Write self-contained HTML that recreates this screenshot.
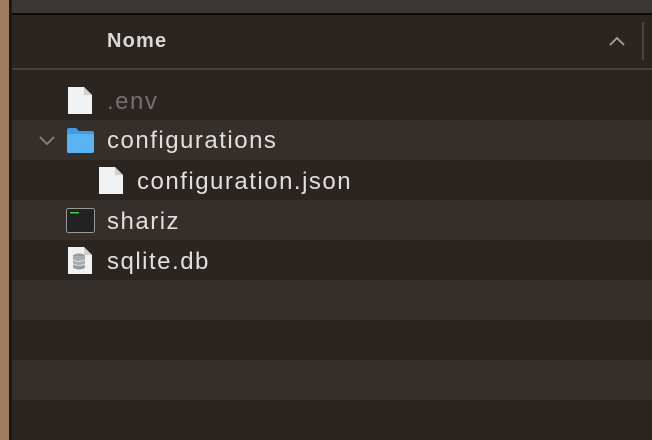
<!DOCTYPE html>
<html><head><style>
body{margin:0;width:652px;height:440px;overflow:hidden;background:#2b2522;font-family:"Liberation Sans",sans-serif;position:relative}
.a{position:absolute}
.row{position:absolute;left:12px;right:0;height:40px}
.l{background:#352f2c}
.t{position:absolute;font-size:24px;letter-spacing:1.5px;color:#e2dedb;line-height:40px;top:0}
</style></head><body>
<div class="a" style="left:0;top:0;width:9px;height:440px;background:#9c7a60"></div>
<div class="a" style="left:9px;top:0;width:3px;height:440px;background:#1c1816"></div>
<div class="a" style="left:12px;top:0;right:0;height:13px;background:#3c3634"></div>
<div class="a" style="left:12px;top:13px;right:0;height:2px;background:#0e0c0b"></div>
<div class="a" style="left:107px;top:30px;font-size:20px;font-weight:bold;letter-spacing:1.2px;color:#dcd8d5">Nome</div>
<svg class="a" style="left:608px;top:35px" width="18" height="12"><path d="M2 10 L9 3 L16 10" stroke="#a8a3a0" stroke-width="1.8" fill="none"/></svg>
<div class="a" style="left:642px;top:22px;width:2px;height:38px;background:#4a4441"></div>
<div class="a" style="left:12px;top:68px;right:0;height:2px;background:#45403d"></div>
<div class="row l" style="top:120px"></div>
<div class="row l" style="top:200px"></div>
<div class="row l" style="top:280px"></div>
<div class="row l" style="top:360px"></div>
<svg class="a" style="left:67px;top:86px" width="26" height="29"><path d="M1 1 H17 L25 9 V28 H1 Z" fill="#f1f1f1"/><path d="M17 1 V9 H25" fill="#cfcfcf"/></svg>
<div class="t" style="left:107px;top:82px;color:#75706d">.env</div>
<svg class="a" style="left:38px;top:134px" width="18" height="12"><path d="M2 3 L9 10 L16 3" stroke="#8a8481" stroke-width="1.8" fill="none"/></svg>
<svg class="a" style="left:66px;top:127px" width="29" height="27"><path d="M1 3 Q1 1 3 1 H10 L13 4 H26 Q28 4 28 6 V24 Q28 26 26 26 H3 Q1 26 1 24 Z" fill="#3d9be6"/><rect x="1" y="7" width="27" height="19" rx="2" fill="#5bb2f2"/></svg>
<div class="t" style="left:107px;top:121px">configurations</div>
<svg class="a" style="left:98px;top:166px" width="26" height="29"><path d="M1 1 H17 L25 9 V28 H1 Z" fill="#f1f1f1"/><path d="M17 1 V9 H25" fill="#cfcfcf"/></svg>
<div class="t" style="left:137px;top:162px">configuration.json</div>
<svg class="a" style="left:66px;top:208px" width="29" height="25"><rect x="0.5" y="0.5" width="28" height="24" rx="2" fill="#222" stroke="#9a9a9a"/><rect x="4" y="4" width="9" height="1.5" fill="#4c4"/></svg>
<div class="t" style="left:107px;top:202px">shariz</div>
<svg class="a" style="left:67px;top:246px" width="26" height="29"><path d="M1 1 H17 L25 9 V28 H1 Z" fill="#f1f1f1"/><path d="M17 1 V9 H25" fill="#cfcfcf"/><ellipse cx="12" cy="10" rx="6" ry="2.5" fill="#999"/><rect x="6" y="10" width="12" height="11" fill="#aaa"/><ellipse cx="12" cy="21" rx="6" ry="2.5" fill="#999"/><path d="M6 14 Q12 17 18 14 M6 18 Q12 21 18 18" stroke="#ddd" fill="none"/></svg>
<div class="t" style="left:107px;top:242px">sqlite.db</div>
</body></html>
